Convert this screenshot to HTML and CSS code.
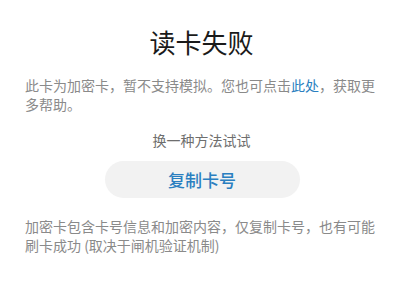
FILE: index.html
```
<!DOCTYPE html>
<html lang="zh-CN">
<head>
<meta charset="utf-8">
<link rel="stylesheet" href="styles.css">
</head>
<body>
<div class="page">
  <h1 class="title">读卡失败</h1>
  <p class="desc">此卡为加密卡，暂不支持模拟。您也可点击<span class="link">此处</span>，获取更多帮助。</p>
  <p class="alt">换一种方法试试</p>
  <div class="btn-row"><button class="btn">复制卡号</button></div>
  <p class="desc note">加密卡包含卡号信息和加密内容，仅复制卡号，也有可能刷卡成功 (取决于闸机验证机制)</p>
</div>
</body>
</html>
```
FILE: styles.css
```
html, body {
  margin: 0;
  padding: 0;
  background: #ffffff;
}
.page {
  width: 400px;
  box-sizing: border-box;
  padding: 25px 22px 0 25px;
  font-family: "Noto Sans CJK SC", "Noto Sans", sans-serif;
  display: flex;
  flex-direction: column;
}
.title {
  margin: 0;
  font-size: 26px;
  font-weight: 400;
  color: #1a1a1a;
  text-align: center;
  line-height: 34px;
}
.desc {
  margin: 17px 0 0;
  font-size: 14px;
  line-height: 19px;
  color: #8a8a8a;
}
.link {
  color: #2a7fc0;
}
.alt {
  margin: 17px 0 0;
  font-size: 14px;
  line-height: 19px;
  color: #6e6e6e;
  text-align: center;
}
.btn-row {
  display: flex;
  justify-content: center;
  margin: 11px 0 0;
}
.btn {
  width: 195px;
  height: 37px;
  border: none;
  border-radius: 19px;
  background: #f2f2f2;
  color: #2a7fc0;
  font-family: "Noto Sans CJK SC", "Noto Sans", sans-serif;
  font-size: 17px;
  font-weight: 500;
  padding: 0;
  margin-left: 1px;
}
.note {
  margin-top: 19px;
}
```
